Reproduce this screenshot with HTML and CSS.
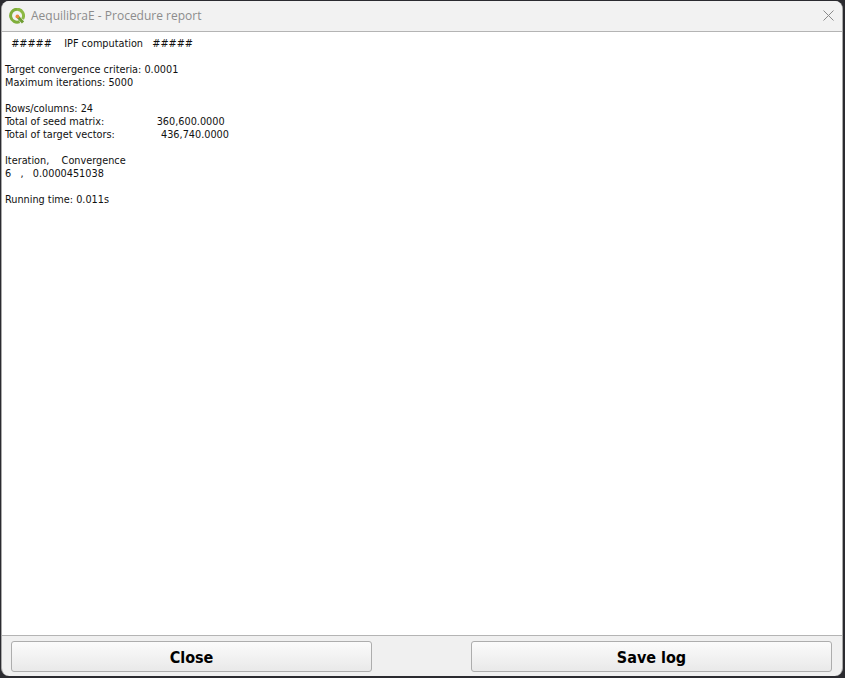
FILE: index.html
```html
<!DOCTYPE html>
<html lang="en">
<head>
<meta charset="utf-8">
<title>AequilibraE - Procedure report</title>
<link rel="stylesheet" href="styles.css">
</head>
<body>
<div class="window">
  <header class="titlebar">
    <svg class="logo" width="16" height="16" viewBox="0 0 16 16" aria-hidden="true">
      <path d="M8 1.2a6.5 6.5 0 1 0 2.6 12.5" fill="none" stroke="#7fae3a" stroke-width="3"/>
      <path d="M8 1.2a6.5 6.5 0 0 1 5.6 9.8" fill="none" stroke="#8cb944" stroke-width="3"/>
      <path d="M8.5 8.5l5.5 6" fill="none" stroke="#6f9e33" stroke-width="3"/>
      <circle cx="8.4" cy="8.4" r="1.9" fill="#e8893a"/>
    </svg>
    <span class="title">AequilibraE - Procedure report</span>
    <svg class="close" width="11" height="11" viewBox="0 0 11 11" aria-hidden="true">
      <path d="M.5.5l10 10M10.5.5l-10 10" stroke="#8a8a8a" stroke-width="1" fill="none"/>
    </svg>
  </header>
  <main class="log">
<pre class="log-text">  #####    IPF computation   #####

Target convergence criteria: 0.0001
Maximum iterations: 5000

Rows/columns: 24
Total of seed matrix:                 360,600.0000
Total of target vectors:               436,740.0000

Iteration,    Convergence
6   ,   0.0000451038

Running time: 0.011s</pre>
  </main>
  <footer class="actions">
    <button class="btn" type="button">Close</button>
    <button class="btn" type="button">Save log</button>
  </footer>
</div>
</body>
</html>
```
FILE: styles.css
```css
* { box-sizing: border-box; }
html, body { margin: 0; height: 100%; background: #2b2b30; overflow: hidden; }
body { padding: 1px 2px 2px 1px; }
.window {
  height: 675px;
  display: flex;
  flex-direction: column;
  background: #f0f0f0;
  border-left: 1px solid #a8a8a8;
  border-right: 1px solid #a8a8a8;
  border-radius: 8px;
  overflow: hidden;
}
.titlebar {
  height: 31px;
  flex: none;
  display: flex;
  align-items: center;
  padding: 0 8px 1px 7px;
  background: #f2f2f2;
  border-bottom: 1px solid #b4b4b4;
}
.logo { flex: none; margin-right: 6px; }
.title { flex: 1; font: 12px "Open Sans", "Noto Sans", sans-serif; color: #8c8c8c; }
.log {
  flex: 1;
  min-height: 0;
  background: #fff;
  padding: 5px 3px;
}
.log-text {
  margin: 0;
  font: 10.8px/13px "DejaVu Sans Condensed", "DejaVu Sans", sans-serif;
  color: #111;
  white-space: pre;
}
.actions {
  height: 41px;
  flex: none;
  display: flex;
  justify-content: space-between;
  padding: 5px 10px 4px 9px;
  border-top: 1px solid #b4b4b4;
}
.btn {
  width: 361px;
  height: 31px;
  border: 1px solid #adadad;
  border-radius: 3px;
  background: linear-gradient(#fbfbfb, #e9e9e9);
  font: bold 16px "DejaVu Sans Condensed", "Liberation Sans", sans-serif;
  color: #000;
  padding: 2px 0 0;
}
```
